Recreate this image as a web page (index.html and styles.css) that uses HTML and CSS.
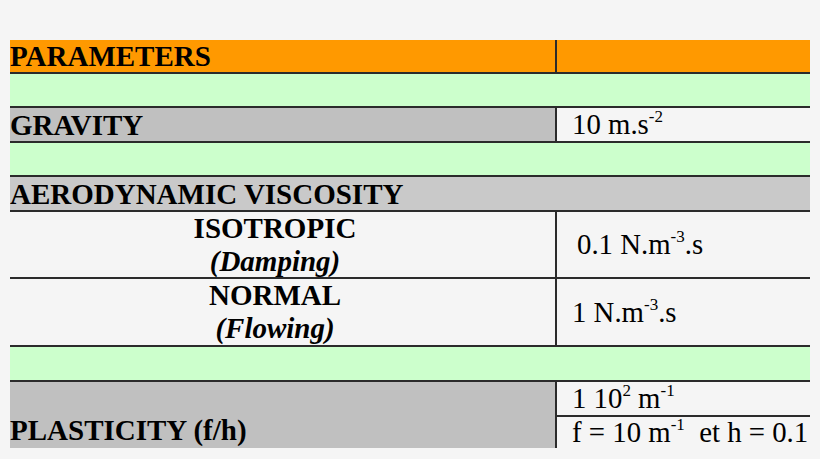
FILE: index.html
```html
<!DOCTYPE html>
<html>
<head>
<meta charset="utf-8">
<link rel="stylesheet" href="styles.css">
</head>
<body>
<div class="sheet">
  <div class="row r-head orange">
    <div class="cell label"><span>PARAMETERS</span></div>
    <div class="cell value"></div>
  </div>
  <div class="row r-green1 green"></div>
  <div class="row r-gravity">
    <div class="cell label gray"><span>GRAVITY</span></div>
    <div class="cell value"><span>10 m.s<span class="sup">-2</span></span></div>
  </div>
  <div class="row r-green2 green"></div>
  <div class="row r-aero gray-light">
    <div class="cell label"><span>AERODYNAMIC VISCOSITY</span></div>
  </div>
  <div class="row r-iso">
    <div class="cell sub"><span>ISOTROPIC</span><i>(Damping)</i></div>
    <div class="cell value indent"><span>0.1 N.m<span class="sup">-3</span>.s</span></div>
  </div>
  <div class="row r-normal">
    <div class="cell sub"><span>NORMAL</span><i>(Flowing)</i></div>
    <div class="cell value"><span>1 N.m<span class="sup">-3</span>.s</span></div>
  </div>
  <div class="row r-green3 green"></div>
  <div class="row r-plast last">
    <div class="cell label gray bottom"><span>PLASTICITY (f/h)</span></div>
    <div class="cell split">
      <div class="part top">1 10<span class="sup">2</span> m<span class="sup">-1</span></div>
      <div class="part">f = 10 m<span class="sup">-1</span>&nbsp; et h = 0.1</div>
    </div>
  </div>
</div>
</body>
</html>
```
FILE: styles.css
```css
html, body {
  margin: 0;
  padding: 0;
  background: #f5f5f5;
}
body {
  padding: 40px 10px 0 10px;
  width: 800px;
  font-family: "Liberation Serif", "Times New Roman", serif;
  color: #000;
}
.sheet {
  display: flex;
  flex-direction: column;
  width: 800px;
}
.row {
  display: grid;
  grid-template-columns: 545px 1fr;
  box-sizing: border-box;
  border-bottom: 2px solid #2b2b2b;
}
.row.last { border-bottom: none; }
.r-head { height: 34px; }
.r-green1 { height: 34px; }
.r-gravity { height: 35px; }
.r-green2 { height: 34px; }
.r-aero { height: 35px; grid-template-columns: 1fr; }
.r-iso { height: 67px; }
.r-normal { height: 68px; }
.r-green3 { height: 35px; }
.r-plast { height: 66px; }

.orange { background: #ff9900; }
.green { background: #ccffcc; }
.gray { background: #c0c0c0; }
.gray-light { background: #c9c9c9; }

.cell {
  min-width: 0;
  overflow: hidden;
  white-space: nowrap;
}
.label {
  font-weight: 700;
  font-size: 29px;
  line-height: 32px;
  display: flex;
  align-items: center;
}
.label.bottom {
  align-items: flex-end;
  padding-bottom: 2px;
}
.value {
  border-left: 2px solid #2b2b2b;
  font-size: 28.8px;
  line-height: 33px;
  padding-left: 15px;
  display: flex;
  align-items: center;
}
.value.indent { padding-left: 20px; }
.sub {
  font-weight: 700;
  font-size: 29px;
  line-height: 33px;
  text-align: center;
  padding-right: 15px;
  display: flex;
  flex-direction: column;
  justify-content: center;
  align-items: center;
}
.sub i { font-style: italic; }
.sup {
  font-size: 17px;
  line-height: 0;
  vertical-align: 12px;
}
.split {
  border-left: 2px solid #2b2b2b;
  display: flex;
  flex-direction: column;
  font-size: 28.8px;
}
.part {
  padding-left: 15px;
  line-height: 31px;
  height: 31px;
  white-space: nowrap;
}
.part.top {
  height: 35px;
  line-height: 33px;
  box-sizing: border-box;
  border-bottom: 2px solid #2b2b2b;
}
```
